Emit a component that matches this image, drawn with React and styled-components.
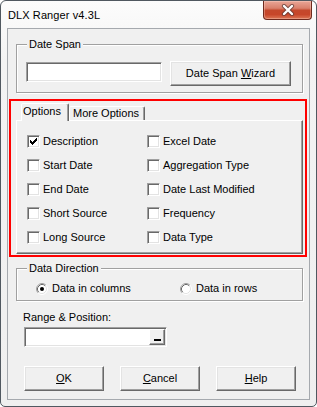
import React from 'react';
import styled, { createGlobalStyle } from 'styled-components';

const GlobalStyle = createGlobalStyle`
  html, body { margin: 0; padding: 0; background: #ffffff; }
  body {
    font-family: "Liberation Sans", Arial, sans-serif;
    font-size: 11px;
    color: #000;
  }
  * { box-sizing: border-box; }
`;

const Window = styled.div`
  width: 317px;
  height: 407px;
  border: 1px solid #505860;
  border-radius: 6px 6px 5px 5px;
  background: linear-gradient(#fcfcfc, #f3f3f3 60px, #efefef);
  display: flex;
  flex-direction: column;
  overflow: hidden;
`;

const TitleBar = styled.div`
  height: 27px;
  flex: none;
  display: flex;
  justify-content: space-between;
  align-items: flex-start;
  padding-left: 7px;
`;

const Title = styled.div`
  margin-top: 8px;
  line-height: 13px;
  font-size: 11px;
  letter-spacing: 0.1px;
`;

const CloseButton = styled.div`
  width: 49px;
  height: 19px;
  margin-right: 4px;
  border: 1px solid #6e2a1e;
  border-top: none;
  border-radius: 0 0 4px 4px;
  background: linear-gradient(#e9a697 0%, #d9806c 40%, #c4482c 52%, #c7462a 75%, #dc7656 100%);
  box-shadow: inset 0 0 0 1px rgba(255, 220, 210, 0.35);
  display: flex;
  align-items: center;
  justify-content: center;
`;

const Client = styled.div`
  flex: 1;
  margin: 0 6px 6px;
  border: 1px solid #a5a9ae;
  background: #f0f0f0;
  display: flex;
  flex-direction: column;
  align-items: flex-start;
`;

const GroupBox = styled.fieldset`
  margin: ${(p) => p.$mt}px 0 0 8px;
  width: 287px;
  min-width: 0;
  padding: ${(p) => p.$pt}px 9px ${(p) => p.$pb}px;
  border: 1px solid #a0a0a0;
  box-shadow: 1px 1px 0 #fff, inset 1px 1px 0 #fff;
`;

const Legend = styled.legend`
  margin-left: 1px;
  padding: 0 2px;
  line-height: 13px;
  font-size: 11px;
  background: #f0f0f0;
`;

const DateSpanRow = styled.div`
  display: flex;
  align-items: flex-start;
  gap: 8px;
`;

const TextBox = styled.div`
  width: ${(p) => p.$w}px;
  height: 20px;
  margin-top: ${(p) => p.$mt || 0}px;
  background: #fff;
  border: 1px solid;
  border-color: #a0a0a0 #fff #fff #a0a0a0;
  box-shadow: inset 1px 1px #696969, inset -1px -1px #e3e3e3;
`;

const Button = styled.button`
  width: ${(p) => p.$w}px;
  height: 25px;
  flex: none;
  padding: 0;
  font-family: "Liberation Sans", Arial, sans-serif;
  font-size: 11px;
  color: #000;
  background: #f0f0f0;
  border: 1px solid;
  border-color: #fff #696969 #696969 #fff;
  box-shadow: inset -1px -1px #a0a0a0, inset 1px 1px #e3e3e3;
  line-height: 13px;
`;

const Key = styled.span`
  text-decoration: underline;
`;

const Highlight = styled.div`
  margin: 6px 0 0 1px;
  width: 298px;
  border: 2px solid #ff0000;
  padding: 2px 2px 1px 5px;
`;

const TabStrip = styled.div`
  display: flex;
  align-items: flex-end;
  padding-left: 5px;
  position: relative;
  z-index: 1;
`;

const Tab = styled.div`
  width: ${(p) => p.$w}px;
  height: ${(p) => (p.$active ? 18 : 14)}px;
  margin-bottom: ${(p) => (p.$active ? -1 : 0)}px;
  padding: ${(p) => (p.$active ? '1px 0 0 1px' : '0 0 0 3px')};
  line-height: 13px;
  background: #f0f0f0;
  border: 1px solid;
  border-bottom: none;
  border-color: #fff #696969 transparent #fff;
  box-shadow: inset -1px 0 #a0a0a0;
  border-radius: 2px 2px 0 0;
  white-space: nowrap;
`;

const TabPanel = styled.div`
  width: 287px;
  border: 1px solid;
  border-color: #fff #696969 #696969 #fff;
  box-shadow: inset -1px -1px #a0a0a0;
  padding: 9px 0 3px 10px;
  display: grid;
  grid-template-columns: 120px 1fr;
  grid-template-rows: repeat(5, 24px);
  grid-auto-flow: column;
`;

const CheckRow = styled.label`
  display: flex;
  align-items: flex-start;
  gap: 3px;
  padding-top: 5px;
  line-height: 13px;
  white-space: nowrap;
`;

const Box = styled.span`
  width: 13px;
  height: 13px;
  flex: none;
  background: #fff;
  border: 1px solid;
  border-color: #a0a0a0 #fff #fff #a0a0a0;
  box-shadow: inset 1px 1px #696969, inset -1px -1px #e3e3e3;
  display: flex;
  align-items: center;
  justify-content: center;
`;

const RadioGroup = styled.div`
  margin-left: 10px;
  display: grid;
  grid-template-columns: 144px auto;
`;

const RadioRow = styled.label`
  display: flex;
  align-items: flex-start;
  gap: 4px;
  line-height: 13px;
  white-space: nowrap;
`;

const RadioIcon = styled.svg`
  flex: none;
  margin-top: 1px;
`;

const FieldLabel = styled.div`
  margin: 10px 0 0 15px;
  line-height: 13px;
`;

const RangeField = styled.div`
  margin: 3px 0 0 16px;
  width: 143px;
  height: 20px;
  background: #fff;
  border: 1px solid;
  border-color: #a0a0a0 #fff #fff #a0a0a0;
  box-shadow: inset 1px 1px #696969, inset -1px -1px #e3e3e3;
  display: flex;
  justify-content: flex-end;
  padding: 1px;
`;

const RangeButton = styled.div`
  width: 16px;
  height: 100%;
  background: #f0f0f0;
  border: 1px solid;
  border-color: #fff #696969 #696969 #fff;
  box-shadow: inset -1px -1px #a0a0a0;
  display: flex;
  align-items: flex-end;
  justify-content: center;
  padding-bottom: 3px;
`;

const Bar = styled.span`
  width: 7px;
  height: 2px;
  background: #000;
`;

const ButtonRow = styled.div`
  margin: 19px 0 0 16px;
  display: flex;
  gap: 16px;
`;

const CheckMark = () => (
  <svg width="7" height="7" viewBox="0 0 7 7" shapeRendering="crispEdges">
    <path
      d="M0 2h1v3H0zM1 3h1v3H1zM2 4h1v3H2zM3 3h1v3H3zM4 2h1v3H4zM5 1h1v3H5zM6 0h1v3H6z"
      fill="#000"
    />
  </svg>
);

const Check = ({ checked, children }) => (
  <CheckRow>
    <Box>{checked && <CheckMark />}</Box>
    <span>{children}</span>
  </CheckRow>
);

const Radio = ({ checked, children }) => (
  <RadioRow>
    <RadioIcon width="12" height="12" viewBox="0 0 12 12">
      <circle cx="6" cy="6" r="5" fill="#fff" />
      <path d="M2.11 9.89 A5.5 5.5 0 0 1 9.89 2.11" stroke="#a0a0a0" fill="none" />
      <path d="M9.89 2.11 A5.5 5.5 0 0 1 2.11 9.89" stroke="#ffffff" fill="none" />
      <path d="M2.82 9.18 A4.5 4.5 0 0 1 9.18 2.82" stroke="#696969" fill="none" />
      <path d="M9.18 2.82 A4.5 4.5 0 0 1 2.82 9.18" stroke="#e3e3e3" fill="none" />
      {checked && <circle cx="6" cy="6" r="2" fill="#000" />}
    </RadioIcon>
    <span>{children}</span>
  </RadioRow>
);

const CloseGlyph = () => (
  <svg width="14" height="12" viewBox="0 0 14 12">
    <path d="M3 2 L11 10 M11 2 L3 10" stroke="#5a3a36" strokeWidth="4.2" strokeLinecap="round" opacity="0.75" />
    <path d="M3 2 L11 10 M11 2 L3 10" stroke="#ffffff" strokeWidth="2.4" strokeLinecap="round" />
  </svg>
);

export default function App() {
  return (
    <>
      <GlobalStyle />
      <Window>
        <TitleBar>
          <Title>DLX Ranger v4.3L</Title>
          <CloseButton>
            <CloseGlyph />
          </CloseButton>
        </TitleBar>
        <Client>
          <GroupBox $mt={9} $pt={10} $pb={6}>
            <Legend>Date Span</Legend>
            <DateSpanRow>
              <TextBox $w={136} $mt={1} />
              <Button $w={121}>
                Date Span <Key>W</Key>izard
              </Button>
            </DateSpanRow>
          </GroupBox>

          <Highlight>
            <TabStrip>
              <Tab $active $w={48}>Options</Tab>
              <Tab $w={76}>More Options</Tab>
            </TabStrip>
            <TabPanel>
              <Check checked>Description</Check>
              <Check>Start Date</Check>
              <Check>End Date</Check>
              <Check>Short Source</Check>
              <Check>Long Source</Check>
              <Check>Excel Date</Check>
              <Check>Aggregation Type</Check>
              <Check>Date Last Modified</Check>
              <Check>Frequency</Check>
              <Check>Data Type</Check>
            </TabPanel>
          </Highlight>

          <GroupBox $mt={5} $pt={7} $pb={5}>
            <Legend>Data Direction</Legend>
            <RadioGroup>
              <Radio checked>Data in columns</Radio>
              <Radio>Data in rows</Radio>
            </RadioGroup>
          </GroupBox>

          <FieldLabel>Range &amp; Position:</FieldLabel>
          <RangeField>
            <RangeButton>
              <Bar />
            </RangeButton>
          </RangeField>

          <ButtonRow>
            <Button $w={80}>
              <Key>O</Key>K
            </Button>
            <Button $w={80}>
              <Key>C</Key>ancel
            </Button>
            <Button $w={80}>
              <Key>H</Key>elp
            </Button>
          </ButtonRow>
        </Client>
      </Window>
    </>
  );
}
